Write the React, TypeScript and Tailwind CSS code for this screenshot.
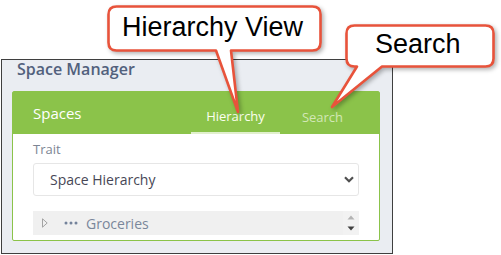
export default function App() {
  return (
    <div className="relative w-[501px] h-[255px] overflow-hidden bg-white pl-px pt-[59px] font-['Open_Sans',sans-serif]">
      {/* panel */}
      <div className="w-[392px] h-[195px] border border-[#3f3f3f] bg-[#eaedf2] pl-[10px]">
        <div className="pl-[5px] pt-px text-[16px] leading-[16px] font-semibold text-[#52617d]">
          Space Manager
        </div>
        <div className="mt-[14px] w-[368px] border border-[#8bc34a] rounded-[2px] bg-white">
          <div className="flex h-[42px] justify-between bg-[#8bc34a] pr-[20px]">
            <div className="flex items-center pl-[20px] pt-px text-[15px] text-white">Spaces</div>
            <div className="flex gap-[6px]">
              <div className="flex w-[89px] items-center justify-center border-b-2 border-[#e1f0cd] pt-[9px] text-[13px] font-medium text-[#fbffee]">
                Hierarchy
              </div>
              <div className="flex w-[73px] items-center justify-center pt-[9px] text-[13px] font-medium text-[#d2e7b6]">
                Search
              </div>
            </div>
          </div>
          <div className="px-[20px] pb-[5px]">
            <div className="pt-[6px] text-[13px] leading-[18px] text-[#7d8594]">Trait</div>
            <div className="mt-[5px] flex h-[33px] items-center justify-between rounded-[3px] border border-[#e6e6e6] pl-[16px] pr-[4px]">
              <span className="text-[14px] text-[#474756]">Space Hierarchy</span>
              <svg width="10" height="7" viewBox="0 0 10 7">
                <path d="M1 1.2 L5 5.2 L9 1.2" fill="none" stroke="#505050" strokeWidth="2.2" />
              </svg>
            </div>
            <div className="mt-[15px] flex h-[24px] items-center bg-[#f0f0f0]">
              <svg className="ml-[9px]" width="6" height="10" viewBox="0 0 6 10">
                <path d="M0.5 0.8 L5.2 5 L0.5 9.2 Z" fill="none" stroke="#a3a3a3" strokeWidth="1" />
              </svg>
              <svg className="ml-[16px]" width="14" height="4" viewBox="0 0 14 4">
                <circle cx="2" cy="2" r="1.5" fill="#74839b" />
                <circle cx="7" cy="2" r="1.5" fill="#74839b" />
                <circle cx="12" cy="2" r="1.5" fill="#74839b" />
              </svg>
              <span className="ml-[8px] text-[14px] text-[#7a879b]">Groceries</span>
              <div className="ml-auto flex h-full w-[16px] flex-col items-center justify-center gap-[6px] bg-[#f2f2f2]">
                <svg width="8" height="5" viewBox="0 0 8 5">
                  <path d="M0.5 4.5 L4 0.5 L7.5 4.5 Z" fill="#b3b3b3" />
                </svg>
                <svg width="8" height="5" viewBox="0 0 8 5">
                  <path d="M0.5 0.5 L4 4.5 L7.5 0.5 Z" fill="#404040" />
                </svg>
              </div>
            </div>
          </div>
        </div>
      </div>

      {/* callouts */}
      <svg
        className="pointer-events-none absolute left-0 top-0 drop-shadow-[2px_2px_2px_rgba(0,0,0,0.3)]"
        width="501"
        height="255"
        viewBox="0 0 501 255"
      >
        <path
          d="M116.5 6.5 H312.5 Q320.5 6.5 320.5 14.5 V42.5 Q320.5 50.5 312.5 50.5 H231 L238 112 L216 50.5 H116.5 Q108.5 50.5 108.5 42.5 V14.5 Q108.5 6.5 116.5 6.5 Z"
          fill="white"
          stroke="#e8533b"
          strokeWidth="2.6"
          strokeLinejoin="round"
        />
        <path
          d="M354.5 25.5 H485.5 Q493.5 25.5 493.5 33.5 V58.5 Q493.5 66.5 485.5 66.5 H382 L332 107 L357 66.5 H354.5 Q346.5 66.5 346.5 58.5 V33.5 Q346.5 25.5 354.5 25.5 Z"
          fill="white"
          stroke="#e8533b"
          strokeWidth="2.6"
          strokeLinejoin="round"
        />
      </svg>
      <span className="absolute left-[122px] top-[12px] font-['Liberation_Sans',Arial,sans-serif] text-[27px] leading-[30px] text-black">
        Hierarchy View
      </span>
      <span className="absolute left-[375px] top-[29px] font-['Liberation_Sans',Arial,sans-serif] text-[27px] leading-[30px] text-black">
        Search
      </span>
    </div>
  );
}
